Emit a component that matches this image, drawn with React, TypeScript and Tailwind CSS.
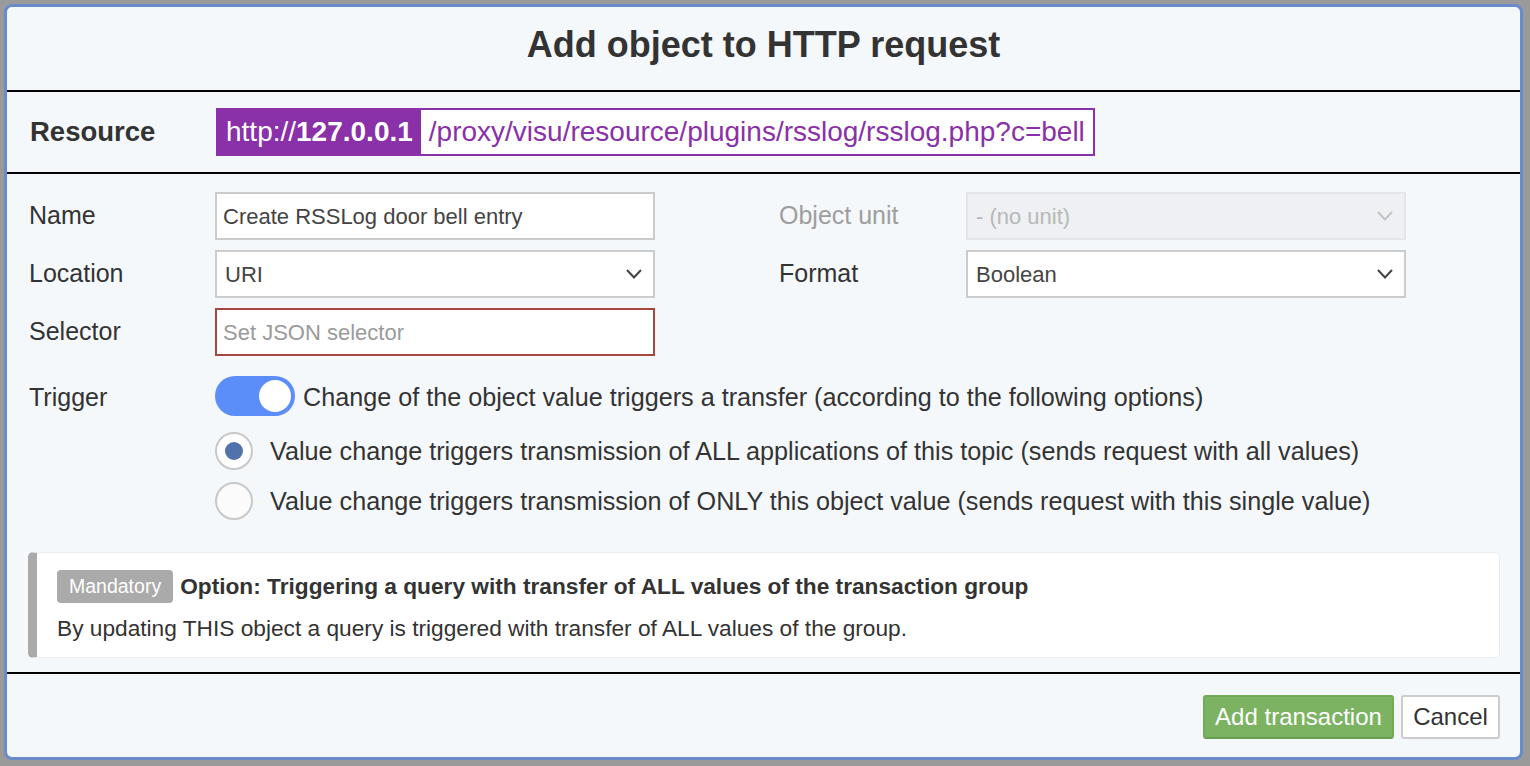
import React from "react";

const font = { fontFamily: '"Liberation Sans", Arial, sans-serif' };

function Chevron({ color = "#444" }: { color?: string }) {
  return (
    <svg width="18" height="12" viewBox="0 0 18 12" className="shrink-0">
      <polyline points="2,2 9,9.5 16,2" fill="none" stroke={color} strokeWidth="2" />
    </svg>
  );
}

export default function App() {
  return (
    <div className="w-[1530px] h-[766px] bg-[#9a9a9a] pt-[4px] pl-[4px] overflow-hidden text-[#333]" style={font}>
      <div className="w-[1519px] h-[756px] border-[3px] border-[#6a8bc9] rounded-[8px] bg-[#f5f8fb] flex flex-col overflow-hidden">
        {/* Header */}
        <div className="h-[85px] flex items-center justify-center pb-[7px] border-b-2 border-black shrink-0">
          <h1 className="text-[36px] font-bold leading-none text-[#333]">Add object to HTTP request</h1>
        </div>
        {/* Resource */}
        <div className="h-[82px] flex items-center pl-[23px] border-b-2 border-black shrink-0">
          <div className="w-[186px] text-[27.5px] font-bold">Resource</div>
          <div className="h-[48px] flex items-stretch border-2 border-[#8a30a8] bg-white">
            <div className="bg-[#8a30a8] text-white text-[28px] flex items-center pl-[8px] pr-[8px] leading-none">
              http://<span className="font-bold">127.0.0.1</span>
            </div>
            <div className="text-[#8a30a8] text-[28px] flex items-center pl-[8px] pr-[8px] leading-none">
              /proxy/visu/resource/plugins/rsslog/rsslog.php?c=bell
            </div>
          </div>
        </div>
        {/* Body */}
        <div className="h-[498px] pt-[18px] shrink-0">
          <div className="pl-[22px] flex flex-col gap-[10px]">
            <div className="flex items-center h-[48px]">
              <div className="w-[186px] text-[25px]">Name</div>
              <div className="w-[440px] h-[48px] border-2 border-[#cccccc] bg-white flex items-center px-[6px] text-[22px] text-[#444]">
                Create RSSLog door bell entry
              </div>
              <div className="w-[124px]" />
              <div className="w-[187px] text-[25px] text-[#9e9e9e]">Object unit</div>
              <div className="w-[440px] h-[48px] border-2 border-[#e3e5e8] bg-[#eef0f3] flex items-center justify-between pl-[8px] pr-[10px] text-[22px] text-[#b8b8b8]">
                <span>- (no unit)</span>
                <Chevron color="#c4c4c4" />
              </div>
            </div>
            <div className="flex items-center h-[48px]">
              <div className="w-[186px] text-[25px]">Location</div>
              <div className="w-[440px] h-[48px] border-2 border-[#cccccc] bg-white flex items-center justify-between pl-[8px] pr-[10px] text-[22px] text-[#444]">
                <span>URI</span>
                <Chevron />
              </div>
              <div className="w-[124px]" />
              <div className="w-[187px] text-[25px]">Format</div>
              <div className="w-[440px] h-[48px] border-2 border-[#cccccc] bg-white flex items-center justify-between pl-[8px] pr-[10px] text-[22px] text-[#444]">
                <span>Boolean</span>
                <Chevron />
              </div>
            </div>
            <div className="flex items-center h-[48px]">
              <div className="w-[186px] text-[25px]">Selector</div>
              <div className="w-[440px] h-[48px] border-2 border-[#a4473f] bg-white flex items-center px-[6px] text-[22px] text-[#9a9a9a]">
                Set JSON selector
              </div>
            </div>
          </div>
          <div className="pl-[22px] mt-[20px] flex items-center h-[40px]">
            <div className="w-[186px] text-[25px] pt-[3px]">Trigger</div>
            <div className="w-[80px] h-[40px] rounded-full bg-[#5b8ef8] flex items-center justify-end pr-[4px] shrink-0">
              <div className="w-[32px] h-[32px] rounded-full bg-white" />
            </div>
            <div className="ml-[8px] text-[25.2px] pt-[3px]">Change of the object value triggers a transfer (according to the following options)</div>
          </div>
          <div className="pl-[208px] mt-[10px] flex flex-col">
            <div className="h-[50px] flex items-center">
              <div className="w-[38px] h-[38px] rounded-full border-2 border-[#c8c8c8] bg-white flex items-center justify-center shrink-0">
                <div className="w-[18px] h-[18px] rounded-full bg-[#5072ad]" />
              </div>
              <div className="ml-[17px] text-[25.2px] pt-[2px]">Value change triggers transmission of ALL applications of this topic (sends request with all values)</div>
            </div>
            <div className="h-[50px] flex items-center">
              <div className="w-[38px] h-[38px] rounded-full border-2 border-[#c8c8c8] bg-[#fbfbfb] shrink-0" />
              <div className="ml-[17px] text-[25.2px] pt-[2px]">Value change triggers transmission of ONLY this object value (sends request with this single value)</div>
            </div>
          </div>
          <div className="ml-[21px] mt-[26px] w-[1472px] h-[106px] bg-white border border-[#ececec] border-l-[9px] border-l-[#aaaaaa] rounded-[5px] pl-[20px] pt-[17px]">
            <div className="flex items-center h-[33px]">
              <span className="h-[33px] px-[12px] rounded-[4px] bg-[#aaaaaa] text-white text-[19.5px] flex items-center">Mandatory</span>
              <span className="ml-[7px] text-[22.7px] font-bold">Option: Triggering a query with transfer of ALL values of the transaction group</span>
            </div>
            <div className="mt-[12px] text-[22.7px] leading-[26px]">By updating THIS object a query is triggered with transfer of ALL values of the group.</div>
          </div>
        </div>
        {/* Footer */}
        <div className="flex-1 border-t-2 border-black flex items-start justify-end pr-[20px] pt-[21px] gap-[7px]">
          <button className="h-[44px] w-[191px] bg-[#7cb362] border-2 border-[#73aa58] border-b-[#6a9f52] rounded-[3px] text-white text-[24px] flex items-center justify-center">
            Add transaction
          </button>
          <button className="h-[44px] w-[99px] bg-white border-2 border-[#cccccc] rounded-[3px] text-[#333] text-[24px] flex items-center justify-center">
            Cancel
          </button>
        </div>
      </div>
    </div>
  );
}
